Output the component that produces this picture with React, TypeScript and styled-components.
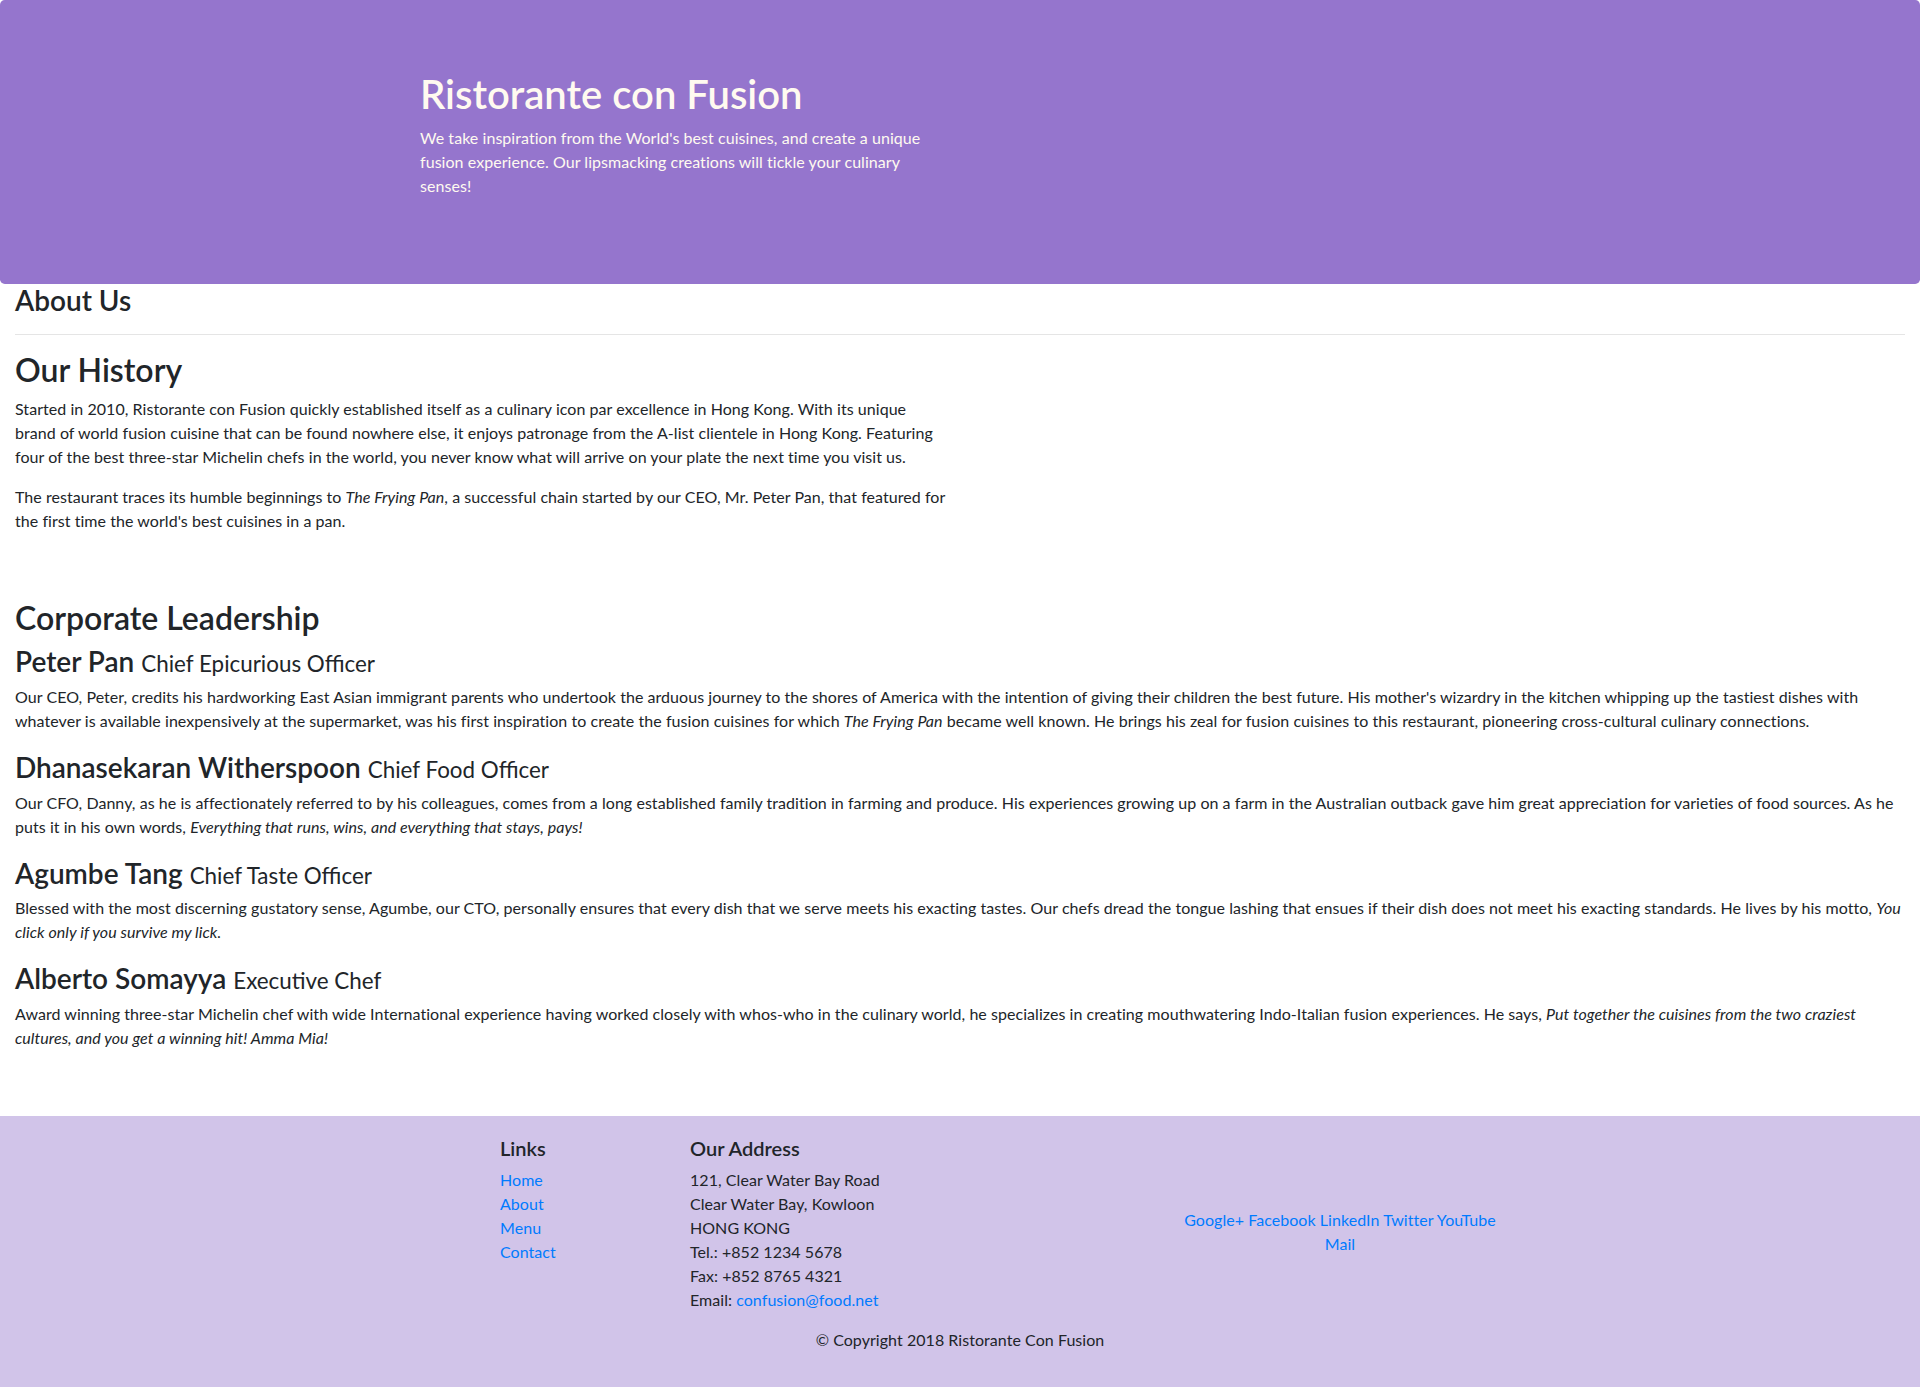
import React from "react";
import styled, { createGlobalStyle } from "styled-components";

const GlobalStyle = createGlobalStyle`
  *, *::before, *::after { box-sizing: border-box; }
  body {
    margin: 0;
    font-family: Lato, "Noto Sans", sans-serif;
    font-size: 16px;
    line-height: 1.5;
    letter-spacing: 0.05px;
    color: #212529;
    background: #fff;
  }
`;

/* ---------- Header ---------- */
const Jumbotron = styled.header`
  background: #9575cd;
  color: floralwhite;
  padding: 70px 30px;
  border-radius: 4.8px;
`;

const Container = styled.div`
  max-width: 1140px;
  margin: 0 auto;
  padding: 0 15px;
`;

const HeaderRow = styled.div`
  display: flex;
  margin: 0 auto;
`;

const HeaderCol = styled.div`
  width: 50%;
  padding: 0 15px;
`;

const Title = styled.h1`
  font-size: 40px;
  font-weight: 600;
  line-height: 1.2;
  letter-spacing: 0;
  margin: 0 0 8px;
`;

const Lead = styled.p`
  margin: 0 0 16px;
`;

/* ---------- Main ---------- */
const Main = styled.main`
  padding: 0 15px 48px;
`;

const PageTitle = styled.h3`
  font-size: 28px;
  font-weight: 600;
  line-height: 1.2;
  letter-spacing: 0;
  margin: 0;
`;

const Rule = styled.hr`
  margin: 16px 0;
  border: 0;
  border-top: 1px solid rgba(0, 0, 0, 0.1);
`;

const HistorySection = styled.section`
  width: 930px;
  padding-bottom: 50px;
`;

const SectionTitle = styled.h2`
  font-size: 32px;
  font-weight: 600;
  line-height: 1.2;
  letter-spacing: 0;
  margin: 0 0 8px;
`;

const Paragraph = styled.p`
  margin: 0 0 16px;
`;

const Leader = styled.article`
  padding-bottom: 2px;
`;

const LeaderName = styled.h3`
  font-size: 28px;
  font-weight: 600;
  line-height: 1.2;
  letter-spacing: 0;
  margin: 0 0 6px;
`;

const Designation = styled.small`
  font-size: 80%;
  font-weight: 400;
`;

/* ---------- Footer ---------- */
const Footer = styled.footer`
  background: #d1c4e9;
  padding: 20px 0;
`;

const FooterRow = styled.div<{ $center?: boolean }>`
  display: flex;
  flex-wrap: wrap;
  margin: 0 -15px;
  justify-content: ${(p) => (p.$center ? "center" : "flex-start")};
`;

const FooterCol = styled.div<{ $span?: number; $offset?: number; $middle?: boolean }>`
  padding: 0 15px;
  width: ${(p) => (p.$span ? `${(p.$span / 12) * 100}%` : "auto")};
  margin-left: ${(p) => (p.$offset ? `${(p.$offset / 12) * 100}%` : "0")};
  align-self: ${(p) => (p.$middle ? "center" : "auto")};
  text-align: ${(p) => (p.$middle ? "center" : "left")};
`;

const FooterTitle = styled.h5`
  font-size: 20px;
  font-weight: 600;
  line-height: 1.2;
  letter-spacing: 0;
  margin: 0 0 8px;
`;

const LinkList = styled.ul`
  list-style: none;
  padding: 0;
  margin: 0 0 16px;
`;

const Link = styled.a`
  color: #007bff;
  text-decoration: none;
`;

const Address = styled.address`
  font-style: normal;
  margin: 0 0 16px;
`;

const Socials = styled.div`
  max-width: 330px;
  margin: 0 auto;
`;

const Copyright = styled.p`
  margin: 0 0 16px;
`;

const leaders = [
  {
    name: "Peter Pan",
    designation: "Chief Epicurious Officer",
    description: (
      <>
        Our CEO, Peter, credits his hardworking East Asian immigrant parents who undertook the arduous journey to the
        shores of America with the intention of giving their children the best future. His mother's wizardry in the
        kitchen whipping up the tastiest dishes with whatever is available inexpensively at the supermarket, was his
        first inspiration to create the fusion cuisines for which <em>The Frying Pan</em> became well known. He brings
        his zeal for fusion cuisines to this restaurant, pioneering cross-cultural culinary connections.
      </>
    ),
  },
  {
    name: "Dhanasekaran Witherspoon",
    designation: "Chief Food Officer",
    description: (
      <>
        Our CFO, Danny, as he is affectionately referred to by his colleagues, comes from a long established family
        tradition in farming and produce. His experiences growing up on a farm in the Australian outback gave him great
        appreciation for varieties of food sources. As he puts it in his own words,{" "}
        <em>Everything that runs, wins, and everything that stays, pays!</em>
      </>
    ),
  },
  {
    name: "Agumbe Tang",
    designation: "Chief Taste Officer",
    description: (
      <>
        Blessed with the most discerning gustatory sense, Agumbe, our CTO, personally ensures that every dish that we
        serve meets his exacting tastes. Our chefs dread the tongue lashing that ensues if their dish does not meet his
        exacting standards. He lives by his motto, <em>You click only if you survive my lick.</em>
      </>
    ),
  },
  {
    name: "Alberto Somayya",
    designation: "Executive Chef",
    description: (
      <>
        Award winning three-star Michelin chef with wide International experience having worked closely with whos-who
        in the culinary world, he specializes in creating mouthwatering Indo-Italian fusion experiences. He says,{" "}
        <em>Put together the cuisines from the two craziest cultures, and you get a winning hit! Amma Mia!</em>
      </>
    ),
  },
];

const socials = ["Google+", "Facebook", "LinkedIn", "Twitter", "YouTube", "Mail"];

export default function App() {
  return (
    <>
      <GlobalStyle />
      <Jumbotron>
        <Container>
          <HeaderRow>
            <HeaderCol>
              <Title>Ristorante con Fusion</Title>
              <Lead>
                We take inspiration from the World's best cuisines, and create a unique fusion experience. Our
                lipsmacking creations will tickle your culinary senses!
              </Lead>
            </HeaderCol>
          </HeaderRow>
        </Container>
      </Jumbotron>

      <Main>
        <PageTitle>About Us</PageTitle>
        <Rule />
        <HistorySection>
          <SectionTitle>Our History</SectionTitle>
          <Paragraph>
            Started in 2010, Ristorante con Fusion quickly established itself as a culinary icon par excellence in Hong
            Kong. With its unique brand of world fusion cuisine that can be found nowhere else, it enjoys patronage from
            the A-list clientele in Hong Kong. Featuring four of the best three-star Michelin chefs in the world, you
            never know what will arrive on your plate the next time you visit us.
          </Paragraph>
          <Paragraph>
            The restaurant traces its humble beginnings to <em>The Frying Pan</em>, a successful chain started by our
            CEO, Mr. Peter Pan, that featured for the first time the world's best cuisines in a pan.
          </Paragraph>
        </HistorySection>

        <section>
          <SectionTitle>Corporate Leadership</SectionTitle>
          {leaders.map((l) => (
            <Leader key={l.name}>
              <LeaderName>
                {l.name} <Designation>{l.designation}</Designation>
              </LeaderName>
              <Paragraph>{l.description}</Paragraph>
            </Leader>
          ))}
        </section>
      </Main>

      <Footer>
        <Container>
          <FooterRow>
            <FooterCol $span={2} $offset={1}>
              <FooterTitle>Links</FooterTitle>
              <LinkList>
                <li><Link href="#">Home</Link></li>
                <li><Link href="#">About</Link></li>
                <li><Link href="#">Menu</Link></li>
                <li><Link href="#">Contact</Link></li>
              </LinkList>
            </FooterCol>
            <FooterCol $span={5}>
              <FooterTitle>Our Address</FooterTitle>
              <Address>
                121, Clear Water Bay Road
                <br />
                Clear Water Bay, Kowloon
                <br />
                HONG KONG
                <br />
                Tel.: +852 1234 5678
                <br />
                Fax: +852 8765 4321
                <br />
                Email: <Link href="#">confusion@food.net</Link>
              </Address>
            </FooterCol>
            <FooterCol $span={4} $middle>
              <Socials>
                {socials.map((s, i) => (
                  <React.Fragment key={s}>
                    <Link href="#">{s}</Link>
                    {i < socials.length - 1 ? " " : ""}
                  </React.Fragment>
                ))}
              </Socials>
            </FooterCol>
          </FooterRow>
          <FooterRow $center>
            <FooterCol>
              <Copyright>© Copyright 2018 Ristorante Con Fusion</Copyright>
            </FooterCol>
          </FooterRow>
        </Container>
      </Footer>
    </>
  );
}
